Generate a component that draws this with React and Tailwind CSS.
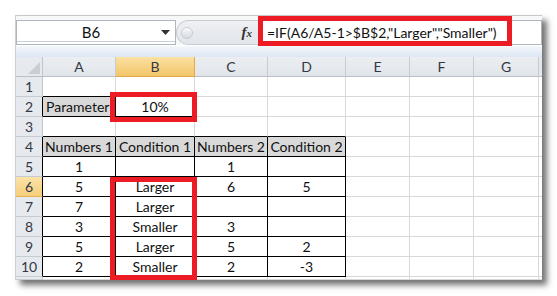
import React from "react";

const COLS = [
  { key: "A", w: "w-[73px]" },
  { key: "B", w: "w-[79px]" },
  { key: "C", w: "w-[73px]" },
  { key: "D", w: "w-[78px]" },
  { key: "E", w: "w-[64px]" },
  { key: "F", w: "w-[64px]" },
  { key: "G", w: "w-[65px]" },
];

const DATA = {
  2: ["Parameter", "10%", "", ""],
  4: ["Numbers 1", "Condition 1", "Numbers 2", "Condition 2"],
  5: ["1", "", "1", ""],
  6: ["5", "Larger", "6", "5"],
  7: ["7", "Larger", "", ""],
  8: ["3", "Smaller", "3", ""],
  9: ["5", "Larger", "5", "2"],
  10: ["2", "Smaller", "2", "-3"],
};

function inTable(r, c) {
  if (r === 2 && (c === 0 || c === 1)) return true;
  if (r >= 4 && r <= 10 && c >= 0 && c <= 3) return true;
  return false;
}

function Cell({ r, c, w }) {
  const mine = inTable(r, c);
  const right = mine || inTable(r, c + 1);
  const bottom = mine || inTable(r + 1, c);
  const gray = (r === 2 && c === 0) || (r === 4 && c <= 3);
  const text = DATA[r] ? DATA[r][c] || "" : "";
  const left = r === 2 && c === 0;
  return (
    <div
      className={[
        w,
        "h-full shrink-0 border-r border-b flex items-center overflow-visible whitespace-nowrap",
        right ? "border-r-black" : "border-r-[#d8d8d8]",
        bottom ? "border-b-black" : "border-b-[#d8d8d8]",
        gray ? "bg-[#d9d9d9]" : "bg-white",
        left ? "justify-start pl-[3px]" : "justify-center",
      ].join(" ")}
    >
      {text}
    </div>
  );
}

function Row({ r }) {
  const sel = r === 6;
  const hdrRight = inTable(r, 0);
  return (
    <div className="flex h-[20px]">
      <div
        className={[
          "w-[27px] h-full shrink-0 border-r border-b flex items-center justify-center text-[#333844]",
          sel
            ? "bg-gradient-to-b from-[#fbe3a8] to-[#f5cf7a] border-b-[#e6b456]"
            : "bg-[#e6e9ed] border-b-[#c7ccd3]",
          hdrRight ? "border-r-black" : sel ? "border-r-[#e3a94a]" : "border-r-[#c0c6ce]",
        ].join(" ")}
      >
        {r <= 10 ? r : ""}
      </div>
      {COLS.map((col, c) => (
        <Cell key={col.key} r={r} c={c} w={col.w} />
      ))}
      <div className="flex-1 h-full border-b border-b-[#d8d8d8] bg-white" />
    </div>
  );
}

export default function App() {
  return (
    <div className="w-[557px] h-[296px] bg-white pt-[15px] pl-[15px] font-['Lato',sans-serif] text-[14px] text-[#111]">
      <div className="w-[527px] h-[265px] bg-white flex flex-col overflow-hidden border-l border-l-[#d0d0d0] shadow-[5px_5px_6px_rgba(0,0,0,0.55)] relative">
        {/* formula bar */}
        <div className="h-[30px] shrink-0 border-t border-t-[#c8c8c8] bg-[#f7f7f7] flex items-start pt-[4px]">
          <div className="w-[160px] h-[25px] bg-white border border-[#b0b6be] flex items-center relative">
            <div className="flex-1 text-center text-[15px] pl-[4px] text-[#111]">B6</div>
            <svg width="9" height="5" viewBox="0 0 9 5" className="mr-[5px]">
              <path d="M0 0 L9 0 L4.5 5 Z" fill="#333" />
            </svg>
            <div className="absolute left-0 right-0 bottom-[2px] h-px bg-[#c9ced5]" />
          </div>
          <div className="w-[82px] h-[25px] flex items-center bg-gradient-to-b from-[#eef0f3] to-[#e2e5e9] rounded-l-[13px] border border-[#c6cbd2] border-r-0 relative">
            <div className="ml-[4px] w-[12px] h-[12px] rounded-full bg-gradient-to-b from-[#f8f9fa] to-[#d7dbe0] border border-[#c8cdd4]" />
            <div className="flex-1" />
            <span className="mr-[6px] font-['Liberation_Serif',serif] italic font-bold text-[15px] text-[#333] leading-none">
              f<span className="text-[11px]">x</span>
            </span>
          </div>
          <div className="flex-1 h-[25px] bg-white border border-[#b0b6be] flex items-center pl-[8px] text-[14px] whitespace-nowrap">
            =IF(A6/A5-1&gt;$B$2,"Larger","Smaller")
          </div>
        </div>
        {/* strip */}
        <div className="h-[12px] shrink-0 bg-gradient-to-b from-[#f3f7fb] to-[#dde7f3] border-t border-t-white" />
        {/* column header */}
        <div className="flex h-[20px] shrink-0 text-[#333844]">
          <div className="w-[27px] h-full shrink-0 bg-[#e6e9ed] border-r border-b border-r-[#c0c6ce] border-b-[#b9bfc7] relative">
            <svg width="12" height="12" viewBox="0 0 12 12" className="absolute right-[2px] bottom-[2px]">
              <path d="M12 0 L12 12 L0 12 Z" fill="#c9ced4" />
            </svg>
          </div>
          {COLS.map((col) => (
            <div
              key={col.key}
              className={[
                col.w,
                "h-full shrink-0 border-r border-b flex items-center justify-center",
                col.key === "B"
                  ? "bg-gradient-to-b from-[#fbe1a2] to-[#f3c567] border-r-[#e3a94a] border-b-[#e3a94a]"
                  : "bg-gradient-to-b from-[#eceef1] to-[#e1e5ea] border-r-[#c7ccd3] border-b-[#b9bfc7]",
              ].join(" ")}
            >
              {col.key}
            </div>
          ))}
          <div className="flex-1 h-full bg-[#e4e7ec] border-b border-b-[#b9bfc7]" />
        </div>
        {/* rows */}
        {[1, 2, 3, 4, 5, 6, 7, 8, 9, 10, 11].map((r) => (
          <Row key={r} r={r} />
        ))}
        {/* red highlight boxes */}
        <div className="absolute left-[242px] top-[1px] w-[254px] h-[30px] border-[5px] border-[#ed1c24]" />
        <div className="absolute left-[94px] top-[77px] w-[87px] h-[30px] border-[5px] border-[#ed1c24]" />
        <div className="absolute left-[94px] top-[162px] w-[87px] h-[103px] border-[5px] border-[#ed1c24]" />
      </div>
    </div>
  );
}
